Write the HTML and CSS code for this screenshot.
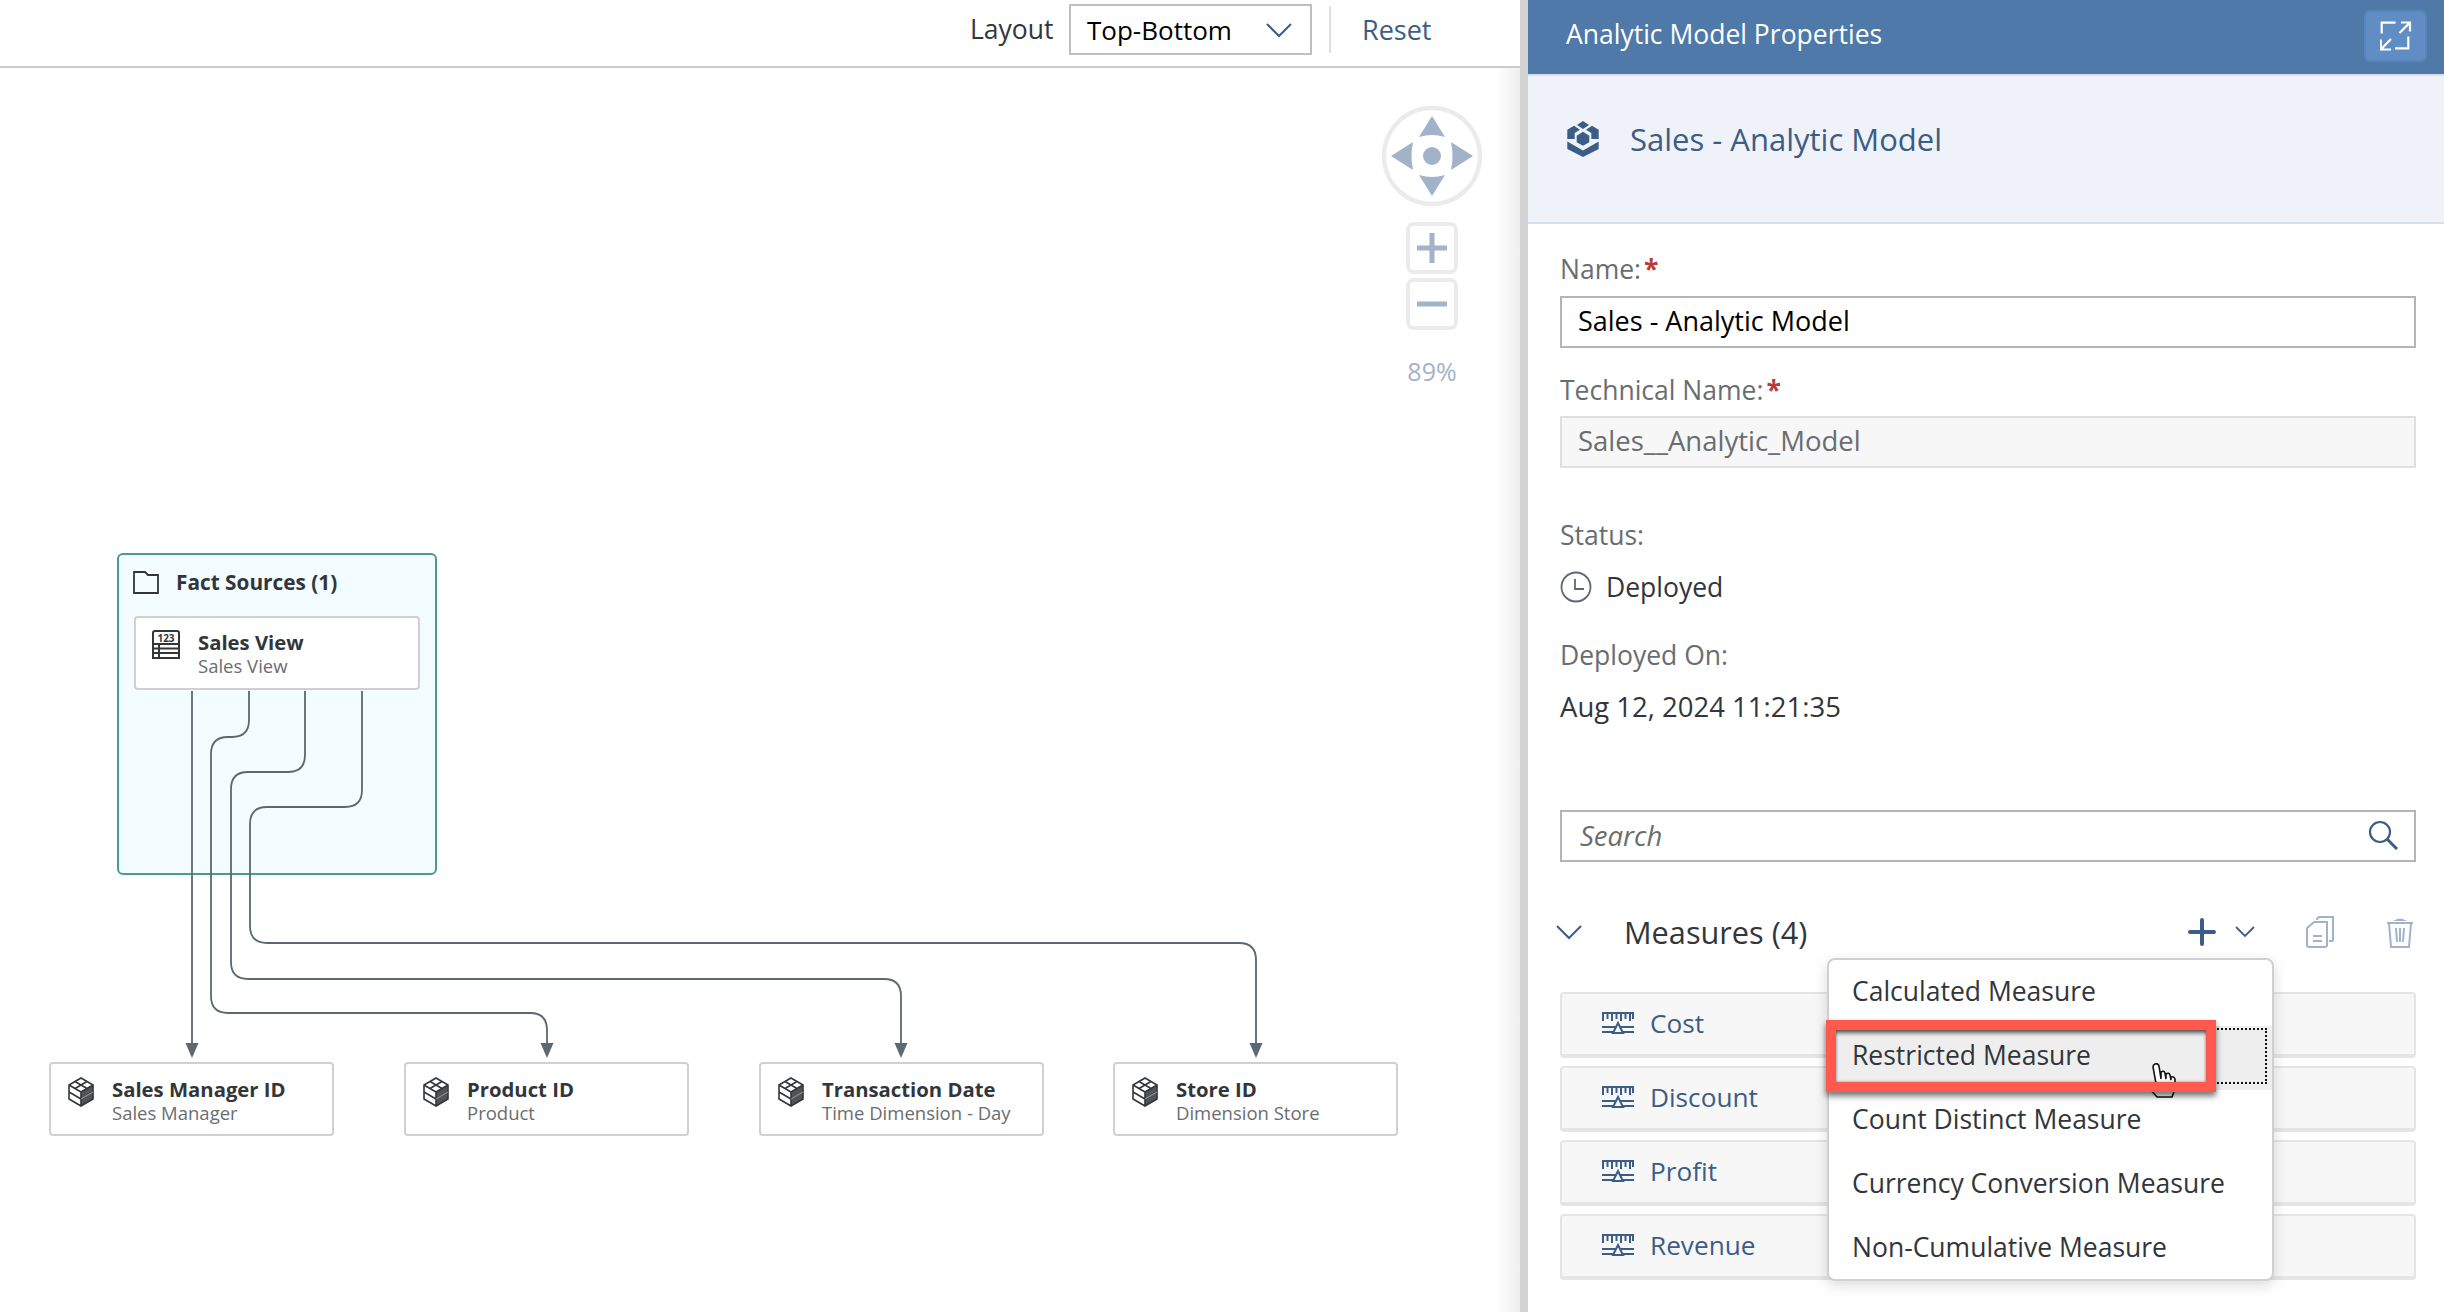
FILE: index.html
```html
<!DOCTYPE html>
<html lang="en">
<head>
    <meta charset="UTF-8">
    <title>Analytic Model Properties</title>
    <link rel="stylesheet" href="styles.css">
</head>
<body>
    <svg class="defs" width="0" height="0">
        <symbol id="cube" viewBox="0 0 26 30">
            <path d="M13 15 25 8v14L13 29z" fill="#32363a" opacity=".85"/>
            <path d="M13 1 25 8v14L13 29 1 22V8z M1 8l12 7 12-7 M13 15v14 M1 15l12 7 M7 4.500l12 7 M19 4.500l-12 7" fill="none" stroke="#32363a" stroke-width="1.600"/>
            <path d="M13 22l12-7" fill="none" stroke="#9a9a9a" stroke-width="1"/>
        </symbol>
        <symbol id="measure" viewBox="0 0 32 24">
            <path d="M0 2h32 M1 2v8 M5.500 2v6 M10 2v8 M14.500 2v6 M19 2v8 M23.500 2v6 M28 2v8 M31 2v6 M0 16h32 M0 21h32" fill="none" stroke="#3c5d85" stroke-width="2"/>
            <path d="M16 12l5 10H11z" fill="#f7f7f7" stroke="#3c5d85" stroke-width="2"/>
        </symbol>
    </svg>

    <div class="app">
        <div class="canvas-pane">
            <div class="toolbar">
                <span class="toolbar-label">Layout</span>
                <div class="select">
                    <span>Top-Bottom</span>
                    <svg width="26" height="16" viewBox="0 0 26 16"><path d="M1 2l12 12L25 2" fill="none" stroke="#3c5d85" stroke-width="2"/></svg>
                </div>
                <div class="toolbar-sep"></div>
                <a class="reset">Reset</a>
            </div>

            <div class="canvas">
                <div class="group">
                    <div class="group-head">
                        <svg width="26" height="23" viewBox="0 0 26 23"><path d="M1 22V1h11l3 3h10v18z" fill="none" stroke="#32363a" stroke-width="1.800"/></svg>
                        <span>Fact Sources (1)</span>
                    </div>
                    <div class="node node-source">
                        <svg class="node-icon" width="28" height="29" viewBox="0 0 28 29">
                            <rect x="1" y="1" width="26" height="27" rx="2" fill="none" stroke="#32363a" stroke-width="2"/>
                            <path d="M1 14h26v14H1z M1 18.500h26 M1 23h26 M7 14v14" fill="#fff" stroke="#32363a" stroke-width="2"/>
                            <text x="14" y="11.500" text-anchor="middle" class="icon-digits">123</text>
                        </svg>
                        <div class="node-text">
                            <div class="node-title">Sales View</div>
                            <div class="node-sub">Sales View</div>
                        </div>
                    </div>
                </div>

                <svg class="edges" width="1500" height="1244" viewBox="0 68 1500 1244">
                    <g fill="none" stroke="#5d6871" stroke-width="1.800">
                        <path d="M192 691V1046"/>
                        <path d="M249 691V720q0 17-17 17h-4q-17 0-17 17V996q0 17 17 17H530q17 0 17 17V1046"/>
                        <path d="M305 691V755q0 17-17 17h-40q-17 0-17 17V962q0 17 17 17H884q17 0 17 17V1046"/>
                        <path d="M362 691V790q0 17-17 17h-78q-17 0-17 17V926q0 17 17 17H1239q17 0 17 17V1046"/>
                    </g>
                    <g fill="#5d6871">
                        <path d="M185.500 1043h13l-6.500 15z"/>
                        <path d="M540.500 1043h13l-6.500 15z"/>
                        <path d="M894.500 1043h13l-6.500 15z"/>
                        <path d="M1249.500 1043h13l-6.500 15z"/>
                    </g>
                </svg>

                <div class="node dim dim-1">
                    <svg class="node-icon" width="26" height="30"><use href="#cube"/></svg>
                    <div class="node-text">
                        <div class="node-title">Sales Manager ID</div>
                        <div class="node-sub">Sales Manager</div>
                    </div>
                </div>
                <div class="node dim dim-2">
                    <svg class="node-icon" width="26" height="30"><use href="#cube"/></svg>
                    <div class="node-text">
                        <div class="node-title">Product ID</div>
                        <div class="node-sub">Product</div>
                    </div>
                </div>
                <div class="node dim dim-3">
                    <svg class="node-icon" width="26" height="30"><use href="#cube"/></svg>
                    <div class="node-text">
                        <div class="node-title">Transaction Date</div>
                        <div class="node-sub">Time Dimension - Day</div>
                    </div>
                </div>
                <div class="node dim dim-4">
                    <svg class="node-icon" width="26" height="30"><use href="#cube"/></svg>
                    <div class="node-text">
                        <div class="node-title">Store ID</div>
                        <div class="node-sub">Dimension Store</div>
                    </div>
                </div>

                <div class="nav">
                    <svg width="100" height="102" viewBox="0 0 100 102">
                        <circle cx="50" cy="51" r="48" fill="#fff" stroke="#ebebeb" stroke-width="4.500"/>
                        <g fill="#a2b3c9">
                            <circle cx="50" cy="51" r="9"/>
                            <path d="M50 11 63 32Q50 28 37 32z"/>
                            <path d="M50 91 63 70Q50 74 37 70z"/>
                            <path d="M9 51 31 37Q28 51 31 65z"/>
                            <path d="M91 51 69 37Q72 51 69 65z"/>
                        </g>
                    </svg>
                    <div class="zoom-btn">
                        <svg width="30" height="30" viewBox="0 0 30 30"><path d="M0 15h30M15 0v30" stroke="#a2b3c9" stroke-width="5"/></svg>
                    </div>
                    <div class="zoom-btn">
                        <svg width="30" height="30" viewBox="0 0 30 30"><path d="M0 15h30" stroke="#a2b3c9" stroke-width="5"/></svg>
                    </div>
                    <div class="zoom-level">89%</div>
                </div>
            </div>
        </div>

        <div class="splitter"></div>

        <div class="panel">
            <div class="panel-head">
                <span>Analytic Model Properties</span>
                <button class="expand">
                    <svg width="32" height="30" viewBox="0 0 32 30"><path d="M1.700 12.500V1.700H15.500 M21 1.500h9v9 M30 1.500 19.500 12 M28.300 15.500V27.300H15 M0.800 18.500V28.500H11 M0.800 28.500 11 18" fill="none" stroke="#fff" stroke-width="2.200"/></svg>
                </button>
            </div>
            <div class="panel-sub">
                <svg width="32" height="36" viewBox="0 0 32 36">
                    <path d="M16 0l6 4-6 4-6-4z M0.300 8.700 7 4.700l6 4-5.300 3.300v6H0.300z M31.700 8.700 25 4.700l-6 4 5.300 3.300v6h7.400z M16 10.700l6.300 4v6.600L16 24.700l-6.300-3.400v-6.600z M0.300 20.500 16 29.500l15.700-9V28L16 36 0.300 28z" fill="#3c5d85"/>
                </svg>
                <span>Sales - Analytic Model</span>
            </div>

            <div class="form">
                <label class="field-label">Name:<span class="req">*</span></label>
                <div class="input">Sales - Analytic Model</div>
                <label class="field-label after-input">Technical Name:<span class="req">*</span></label>
                <div class="input readonly">Sales__Analytic_Model</div>

                <div class="field-label status-label">Status:</div>
                <div class="status">
                    <svg width="32" height="32" viewBox="0 0 32 32"><circle cx="16" cy="16" r="14.500" fill="none" stroke="#5d6871" stroke-width="1.800"/><path d="M15 8v10h9" fill="none" stroke="#5d6871" stroke-width="1.800"/></svg>
                    <span>Deployed</span>
                </div>
                <div class="field-label deployed-label">Deployed On:</div>
                <div class="deployed-value">Aug 12, 2024 11:21:35</div>

                <div class="input search">
                    <span>Search</span>
                    <svg width="30" height="30" viewBox="0 0 30 30"><circle cx="12" cy="12" r="10" fill="none" stroke="#3c5d85" stroke-width="2.200"/><path d="M19 19l10 10" stroke="#3c5d85" stroke-width="3"/></svg>
                </div>

                <div class="section-head">
                    <svg class="chevron" width="26" height="16" viewBox="0 0 26 16"><path d="M1 2l12 12L25 2" fill="none" stroke="#3c5d85" stroke-width="2"/></svg>
                    <span class="section-title">Measures (4)</span>
                    <div class="section-actions">
                        <svg width="28" height="28" viewBox="0 0 28 28"><path d="M2 14h24M14 2v24" stroke="#3c5d85" stroke-width="4" stroke-linecap="round"/></svg>
                        <svg class="small-chevron" width="20" height="12" viewBox="0 0 20 12"><path d="M1 1l9 9 9-9" fill="none" stroke="#3c5d85" stroke-width="1.800"/></svg>
                        <svg class="copy" width="28" height="32" viewBox="0 0 28 32"><path d="M11 4q0-3 3-3h13v23q0 1-1 1h-3 M1 12l7-6h13v23q0 2-2 2H3q-2 0-2-2z M7 20h9 M7 25h9" fill="none" stroke="#a2b3c9" stroke-width="2"/></svg>
                        <svg class="trash" width="28" height="32" viewBox="0 0 28 32"><path d="M7 5Q14 0 21 5z" fill="#a2b3c9"/><path d="M1 7h26 M3 7l2 24h18l2-24 M10 12l1 14 M14 12v14 M18 12l-1 14" fill="none" stroke="#a2b3c9" stroke-width="2"/></svg>
                    </div>
                </div>

                <div class="rows">
                    <div class="row"><svg width="32" height="24"><use href="#measure"/></svg><span>Cost</span></div>
                    <div class="row"><svg width="32" height="24"><use href="#measure"/></svg><span>Discount</span></div>
                    <div class="row"><svg width="32" height="24"><use href="#measure"/></svg><span>Profit</span></div>
                    <div class="row"><svg width="32" height="24"><use href="#measure"/></svg><span>Revenue</span></div>
                </div>
            </div>

            <div class="menu">
                <div class="menu-item">Calculated Measure</div>
                <div class="menu-item hover">Restricted Measure</div>
                <div class="menu-item">Count Distinct Measure</div>
                <div class="menu-item">Currency Conversion Measure</div>
                <div class="menu-item">Non-Cumulative Measure</div>
                <div class="hover-dots"></div>
                <svg class="hand-tail" width="17" height="7" viewBox="0 0 17 7"><path d="M0 0h17l-2 6H3z" fill="#32363a"/></svg>
                <svg class="hand" width="32" height="38" viewBox="0 0 32 38"><path d="M8 1q3-1 4 2l2 13V9q3-2 4 1l1 6v-5q3-2 4 1l1 5v-3q3-1 4 2v10l-3 8H10L1 24q0-3 3-2l6 4L6 4q0-2 2-3z" fill="#fff" stroke="#111" stroke-width="1.600"/></svg>
                <div class="red-box"></div>
            </div>
        </div>
    </div>
</body>
</html>
```

FILE: styles.css
```css
* {
    box-sizing: border-box;
}
html, body {
    margin: 0;
    padding: 0;
    height: 100%;
    overflow: hidden;
    background: #fff;
}
body {
    font-family: "Open Sans", "Noto Sans", sans-serif;
    font-size: 26.500px;
    color: #32363a;
}
.defs {
    position: absolute;
}
.app {
    display: flex;
    height: 1312px;
}

/* left side */
.canvas-pane {
    width: 1520px;
    flex: none;
    display: flex;
    flex-direction: column;
}
.toolbar {
    height: 68px;
    flex: none;
    border-bottom: 2px solid #ccc;
    padding: 4px 0 0 970px;
    display: flex;
    align-items: flex-start;
}
.toolbar-label {
    line-height: 51px;
    width: 99px;
}
.select {
    width: 243px;
    height: 51px;
    border: 2px solid #bfbfbf;
    display: flex;
    align-items: center;
    justify-content: space-between;
    padding: 0 18px 0 16px;
    font-size: 26px;
    color: #000;
}
.toolbar-sep {
    width: 2px;
    height: 47px;
    margin: 2px 31px 0 17px;
    background: #e0e0e0;
}
.reset {
    line-height: 51px;
    font-size: 27px;
    color: #3c5d85;
}
.canvas {
    position: relative;
    flex: 1;
    background: linear-gradient(to right, #fff 1495px, #efefef);
}
.edges {
    position: absolute;
    left: 0;
    top: 0;
}

/* diagram nodes, canvas is 68px below the page top */
.group {
    position: absolute;
    left: 117px;
    top: 485px;
    width: 320px;
    height: 322px;
    background: #f3fcfe;
    border: 2px solid #4a9a9c;
    border-radius: 6px;
    padding: 14px 15px 0 14px;
}
.group-head {
    display: flex;
    align-items: center;
    gap: 17px;
    height: 26px;
    font-size: 20.800px;
    font-weight: 700;
    margin-bottom: 21px;
}
.node {
    display: flex;
    background: #fff;
    border: 2px solid #d0d0d0;
    border-radius: 4px;
    height: 74px;
    padding: 13px 0 0 17px;
}
.node-source {
    margin-left: 1px;
    padding: 12px 0 0 16px;
}
.node-icon {
    flex: none;
    margin-right: 18px;
}
.icon-digits {
    font-size: 10px;
    font-weight: 700;
    fill: #32363a;
}
.node-title {
    font-size: 20.300px;
    font-weight: 700;
    line-height: 24px;
}
.node-sub {
    font-size: 18.500px;
    line-height: 23px;
    color: #6a6d70;
}
.dim {
    position: absolute;
    top: 994px;
    width: 285px;
}
.dim-1 { left: 49px; }
.dim-2 { left: 404px; }
.dim-3 { left: 759px; }
.dim-4 { left: 1113px; }
.nav {
    position: absolute;
    left: 1382px;
    top: 37px;
    width: 100px;
    display: flex;
    flex-direction: column;
    align-items: center;
}
.zoom-btn {
    width: 52px;
    height: 52px;
    border: 4px solid #ebebeb;
    border-radius: 8px;
    display: flex;
    align-items: center;
    justify-content: center;
    margin-bottom: 4px;
}
.nav > svg {
    margin-bottom: 15px;
}
.zoom-level {
    margin-top: 20px;
    font-size: 25px;
    color: #a2b3c9;
}
.splitter {
    width: 8px;
    flex: none;
    background: #d2d2d2;
}

/* right side */
.panel {
    position: relative;
    flex: 1;
}
.panel-head {
    height: 76px;
    background: #4f79a8;
    border-bottom: 2px solid #d5dfee;
    color: #fff;
    display: flex;
    align-items: center;
    justify-content: space-between;
    padding: 0 17px 2px 38px;
}
.panel-head span {
    margin-top: -4px;
}
.expand {
    width: 63px;
    height: 52px;
    background: #5f8dc4;
    border: 2px solid #5985bb;
    border-radius: 6px;
    padding: 0;
    display: flex;
    align-items: center;
    justify-content: center;
}
.panel-sub {
    height: 148px;
    background: #eff3f9;
    border-bottom: 2px solid #d5dfee;
    display: flex;
    align-items: center;
    gap: 31px;
    padding: 0 0 20px 39px;
    color: #3c5d85;
    font-size: 31px;
}
.form {
    padding: 27px 28px 0 32px;
}
.field-label {
    display: block;
    line-height: 36px;
    color: #6a6d70;
    margin-bottom: 9px;
}
.after-input {
    margin-top: 24px;
    margin-bottom: 8px;
}
.req {
    color: #b93a3a;
    font-weight: 700;
    margin-left: 3px;
}
.input {
    height: 52px;
    border: 2px solid #b5b5b5;
    display: flex;
    align-items: center;
    padding: 0 16px 3px;
    font-size: 27px;
    color: #000;
}
.readonly {
    background: #f7f7f7;
    border-color: #e0e0e0;
    font-size: 27.500px;
    color: #6a6d70;
}
.status-label {
    margin-top: 49px;
    margin-bottom: 16px;
}
.status {
    display: flex;
    align-items: center;
    gap: 14px;
    height: 36px;
}
.deployed-label {
    margin-top: 32px;
    margin-bottom: 16px;
}
.deployed-value {
    line-height: 36px;
    font-size: 27.500px;
}
.search {
    margin-top: 85px;
    justify-content: space-between;
    padding: 0 16px 2px 18px;
    font-size: 27.500px;
    font-style: italic;
    color: #6a6d70;
}
.section-head {
    margin-top: 48px;
    height: 44px;
    display: flex;
    align-items: center;
}
.chevron {
    margin-right: 42px;
    margin-left: -4px;
}
.section-title {
    font-size: 30.700px;
}
.section-actions {
    margin-left: auto;
    margin-right: 2px;
    display: flex;
    align-items: center;
}
.small-chevron {
    margin: 0 0 0 19px;
}
.copy {
    margin-left: 51px;
}
.trash {
    margin-left: 52px;
}
.rows {
    margin-top: 38px;
    display: flex;
    flex-direction: column;
    gap: 8px;
}
.row {
    height: 66px;
    background: #f7f7f7;
    border: 2px solid #e5e5e5;
    border-bottom-width: 4px;
    border-radius: 4px;
    display: flex;
    align-items: center;
    gap: 16px;
    padding: 0 0 3px 40px;
    font-size: 26.200px;
    color: #3c5d85;
}

/* popup menu */
.menu {
    position: absolute;
    left: 299px;
    top: 958px;
    width: 447px;
    height: 323px;
    padding-top: 2px;
    background: #fff;
    border: 2px solid #d0d0d0;
    border-radius: 8px;
    box-shadow: 0 4px 14px rgba(0, 0, 0, 0.15);
}
.menu-item {
    height: 64px;
    line-height: 59px;
    padding-left: 23px;
    position: relative;
}
.menu-item.hover {
    background: #eee;
}
.hover-dots {
    position: absolute;
    left: 299px;
    top: 68px;
    width: 139px;
    height: 56px;
    border: 2px dotted #111;
    border-left: none;
}
.hand {
    position: absolute;
    left: 318px;
    top: 103px;
}
.hand-tail {
    position: absolute;
    left: 329px;
    top: 129px;
}
.red-box {
    position: absolute;
    left: -3px;
    top: 60px;
    width: 390px;
    height: 72px;
    border: 10px solid #ff5a4d;
    box-shadow: 0 4px 6px rgba(0, 0, 0, 0.55), inset 0 5px 4px -2px rgba(0, 0, 0, 0.6), inset 0 0 3px rgba(0, 0, 0, 0.4);
}
```
